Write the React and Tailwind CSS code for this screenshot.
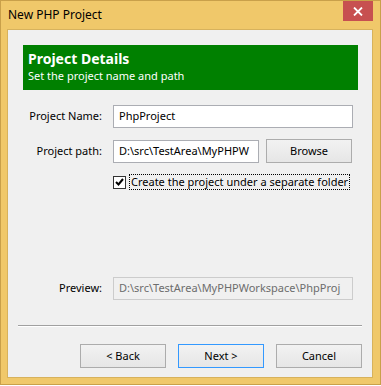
import React from 'react';

const font = { fontFamily: '"Noto Sans", "Segoe UI", sans-serif' };

const Field = ({ value, className = '', disabled }) => (
  <div
    className={`h-[23px] border flex items-center px-[5px] overflow-hidden whitespace-nowrap ${
      disabled ? 'border-[#cccccc] bg-[#f0f0f0] text-[#6d6d6d]' : 'border-[#abadb3] bg-white text-black'
    } ${className}`}
  >
    {value}
  </div>
);

const Button = ({ label, primary, className = '' }) => (
  <div
    className={`h-[24px] w-[86px] flex items-center justify-center border bg-gradient-to-b from-[#f2f2f2] to-[#e6e6e6] text-black whitespace-nowrap ${
      primary ? 'border-[#3399ff]' : 'border-[#acacac]'
    } ${className}`}
  >
    {label}
  </div>
);

export default function App() {
  return (
    <div className="w-[381px] h-[386px] bg-white" style={font}>
      <div className="w-[381px] h-[385px] bg-[#f0c86a] border border-[#c9a04a] flex flex-col">
        {/* Title bar */}
        <div className="h-[28px] flex items-start relative">
          <span className="text-[12px] text-black ml-[7px] mt-[6px] leading-[16px]">New PHP Project</span>
          <div className="absolute right-[7px] top-0 w-[30px] h-[20px] bg-[#c75050] flex items-center justify-center">
            <svg width="10" height="9" viewBox="0 0 10 9">
              <path d="M1 0.5 L9 8.5 M9 0.5 L1 8.5" stroke="white" strokeWidth="1.8" />
            </svg>
          </div>
        </div>

        {/* Client area */}
        <div className="ml-[6px] mr-[7px] h-[349px] bg-[#f0f0f0] border border-[#d7b25d] flex flex-col text-[11px]">
          <div className="ml-[15px] mt-[15px] w-[335px] h-[45px] bg-[#008000] text-white px-[5px] pt-[5px]">
            <div className="text-[14px] font-bold leading-[18px]">Project Details</div>
            <div className="text-[11px] leading-[15px]">Set the project name and path</div>
          </div>

          <div className="ml-[15px] mt-[15px] flex flex-col">
            <div className="flex items-center">
              <div className="w-[80px] text-right pr-[1px] whitespace-nowrap">Project Name:</div>
              <Field value="PhpProject" className="ml-[10px] w-[240px]" />
            </div>
            <div className="flex items-center mt-[11px]">
              <div className="w-[80px] text-right pr-[1px] whitespace-nowrap">Project path:</div>
              <Field value="D:\src\TestArea\MyPHPW" className="ml-[10px] w-[146px]" />
              <Button label="Browse" className="ml-[7px]" />
            </div>
            <div className="flex items-center mt-[11px] ml-[90px]">
              <div className="w-[13px] h-[13px] border border-[#333333] bg-white flex items-center justify-center">
                <svg width="9" height="8" viewBox="0 0 9 8">
                  <path d="M1 4 L3.5 6.5 L8 1" stroke="black" strokeWidth="2" fill="none" />
                </svg>
              </div>
              <div className="ml-[3px] border border-dotted border-black leading-[14px] px-[1px] whitespace-nowrap">
                Create the project under a separate folder
              </div>
            </div>
            <div className="flex items-center mt-[87px]">
              <div className="w-[80px] text-right pr-[1px] whitespace-nowrap">Preview:</div>
              <Field value="D:\src\TestArea\MyPHPWorkspace\PhpProj" disabled className="ml-[10px] w-[240px]" />
            </div>
          </div>

          <div className="mx-[10px] mt-[25px] h-[1px] bg-[#a0a0a0] border-b border-white box-content" />

          <div className="flex justify-end gap-[12px] mr-[10px] mt-[17px]">
            <Button label="< Back" />
            <Button label="Next >" primary />
            <Button label="Cancel" />
          </div>
        </div>
      </div>
    </div>
  );
}
